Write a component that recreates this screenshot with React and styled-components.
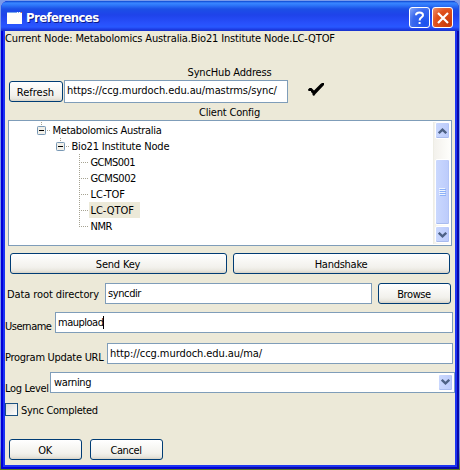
import React from "react";
import styled, { createGlobalStyle } from "styled-components";

const Global = createGlobalStyle`
  * { box-sizing: border-box; }
  body { margin: 0; background: #7f9be8; }
`;

const Desktop = styled.div`
  width: 460px;
  height: 470px;
  padding: 1px;
  overflow: hidden;
  background: linear-gradient(#7b9aea, #7f97ec 95%, #5a7a20);
  font-family: "DejaVu Sans Condensed", "DejaVu Sans", sans-serif;
  font-stretch: condensed;
  font-size: 11px;
  color: #000;
`;

const Window = styled.div`
  width: 458px;
  height: 468px;
  display: flex;
  flex-direction: column;
  border-radius: 7px 7px 0 0;
  overflow: hidden;
  background: linear-gradient(90deg, #0000d8 50%, #0808a8 50%);
`;

const TitleBar = styled.header`
  height: 30px;
  flex: none;
  display: flex;
  align-items: center;
  padding: 3px 6px 0 6px;
  background: linear-gradient(#0a45d0 0, #3a86ff 2px, #2f78fa 4px, #1c4fe6 8px, #1f43ea 14px, #2850fb 22px, #2858ff 26px, #1f40e8 28px, #1630c8 30px);
`;

const Title = styled.h1`
  margin: 0 auto 0 4px;
  font: bold 13px/18px "DejaVu Sans Condensed", "DejaVu Sans", sans-serif;
  font-stretch: condensed;
  letter-spacing: ${(p) => p.$spacing}px;
  color: #fff;
  text-shadow: 1px 1px 0 #0a1a8a;
`;

const CaptionButton = styled.button`
  width: 21px;
  height: 21px;
  margin: 0 0 0 2px;
  padding: 0;
  display: grid;
  place-items: center;
  border: 1px solid #fff;
  border-radius: 3px;
  background: ${(p) =>
    p.$close
      ? "radial-gradient(circle at 80% 80%, #c83a08, #e0501c 60%, #ee9474)"
      : "radial-gradient(circle at 80% 80%, #1a50f0, #3a68ee 60%, #8aaaf8)"};
`;

const Client = styled.main`
  margin: 0 2px;
  height: 436px;
  flex: none;
  display: flex;
  flex-direction: column;
  border: 2px solid #1c34f2;
  border-top: 0;
  background: #ece9d8;
`;

const Row = styled.div`
  flex: none;
  display: flex;
  align-items: center;
  height: ${(p) => p.$h}px;
  margin-top: ${(p) => p.$top || 0}px;
  padding-left: ${(p) => p.$left || 0}px;
  justify-content: ${(p) => (p.$center ? "center" : "flex-start")};
`;

const Heading = styled(Row)`
  padding-right: 1px;
`;

const Text = styled.span`
  flex: none;
  white-space: nowrap;
  line-height: 14px;
  padding-top: 2px;
  letter-spacing: ${(p) => p.$spacing || 0}px;
  width: ${(p) => (p.$w ? `${p.$w}px` : "auto")};
  margin-top: ${(p) => p.$drop || 0}px;
`;

const Button = styled.button`
  width: ${(p) => p.$w}px;
  height: 21px;
  margin: 0 0 0 ${(p) => p.$gap || 0}px;
  padding: 2px 1px 0 0;
  border: 1px solid #003c74;
  border-radius: 3px;
  font: inherit;
  line-height: 14px;
  letter-spacing: ${(p) => p.$spacing || 0}px;
  color: #000;
  background: linear-gradient(#fff, #f2f1ec 70%, #e8e6de 88%, #d6d2c6);
`;

const Field = styled.div`
  width: ${(p) => p.$w}px;
  height: ${(p) => (p.$tall ? 23 : 21)}px;
  margin-left: ${(p) => p.$gap || 0}px;
  display: flex;
  align-items: center;
  padding: 0 ${(p) => (p.$combo ? 1 : 2)}px ${(p) => (p.$tall ? 3 : 1)}px ${(p) => p.$pad || 2}px;
  border: 1px solid #7f9db9;
  background: #fff;
`;

const Caret = styled.i`
  width: 1px;
  height: 13px;
  background: #000;
`;

const CheckMark = styled.svg`
  margin: 0 0 5px 20px;
`;

const Tree = styled.section`
  width: 444px;
  height: 126px;
  margin: 1px 0 0 3px;
  flex: none;
  display: flex;
  border: 1px solid #7f9db9;
  background: #fff;
`;

const Items = styled.ul`
  flex: 1;
  margin: 0;
  padding: 1px 0 0;
  list-style: none;
`;

const Item = styled.li`
  height: 16px;
  display: flex;
  align-items: center;
  padding-left: ${(p) => p.$indent}px;
`;

const ItemLabel = styled.span`
  height: 16px;
  line-height: 17px;
  padding-left: 1.5px;
  white-space: nowrap;
  letter-spacing: ${(p) => p.$spacing}px;
  width: ${(p) => (p.$selected ? "51px" : "auto")};
  background: ${(p) => (p.$selected ? "#ece9d8" : "transparent")};
`;

const Scroll = styled.div`
  width: 17px;
  margin: 1px 1px 1px 0;
  display: flex;
  flex-direction: column;
  align-items: center;
  border-left: 1px solid #eeede5;
  background: linear-gradient(90deg, #f3f1ec, #fefefb);
`;

const ScrollButton = styled.div`
  width: 15px;
  height: ${(p) => p.$h || 17}px;
  flex: none;
  display: grid;
  place-items: center;
  margin-top: ${(p) => p.$top || 0}px;
  border: 1px solid #fff;
  border-radius: 2px;
  background: linear-gradient(90deg, #cad8fe, #bccbfb);
  box-shadow: inset 0 -1px 0 #a8bbee, inset -1px 0 0 #b2c4f6;
`;

const CheckBox = styled.span`
  width: 13px;
  height: 13px;
  margin-right: 3px;
  border: 1px solid #1c5180;
  background: linear-gradient(135deg, #dcdcd7, #fff);
`;

const Arrow = ({ up }) => (
  <svg width="9" height="6" viewBox="0 0 9 6">
    <path d={up ? "M.8 5.2 4.5 1.6 8.2 5.2" : "M.8 .8 4.5 4.4 8.2 .8"} fill="none" stroke="#4d6185" strokeWidth="2.3" />
  </svg>
);

const Branch = ({ last }) => (
  <svg width="10" height="16" viewBox="0 0 10 16" shapeRendering="crispEdges">
    <path d={last ? "M.5 0V9" : "M.5 0V16"} stroke="#a6a392" strokeDasharray="1 1" />
    <path d="M2 8.5H9" stroke="#a6a392" strokeDasharray="1 1" />
  </svg>
);

const Expander = () => (
  <svg width="14" height="16" viewBox="0 0 14 16">
    <path d="M4.5 0V4M10 8.5H13" stroke="#a6a392" strokeDasharray="1 1" shapeRendering="crispEdges" />
    <rect x=".5" y="4.5" width="8" height="8" rx=".8" fill="#f1efe8" stroke="#7898b5" />
    <path d="M2 8.5H7" stroke="#000" shapeRendering="crispEdges" />
  </svg>
);

const WindowIcon = () => (
  <svg width="15" height="12" viewBox="0 0 15 12" shapeRendering="crispEdges">
    <path d="M0 0H15V12H0Z" fill="#fffefb" />
    <path d="M0 0H15V1H0Z" fill="#7aa8ec" />
    <path d="M10 0H11V1H10ZM12 0H13V1H12Z" fill="#fff" />
    <path d="M14 0H15V1H14Z" fill="#e07048" />
  </svg>
);

const nodes = [
  { name: "GCMS001", spacing: -0.55 },
  { name: "GCMS002", spacing: -0.4 },
  { name: "LC-TOF", spacing: 0 },
  { name: "LC-QTOF", spacing: -0.05, selected: true },
  { name: "NMR", spacing: -0.5, last: true },
];

export default function App() {
  return (
    <Desktop>
      <Global />
      <Window>
        <TitleBar>
          <WindowIcon />
          <Title $spacing={-0.6}>Preferences</Title>
          <CaptionButton aria-label="Help">
            <svg width="11" height="14" viewBox="0 0 11 14">
              <path d="M2 4.2C2 .6 9 .6 9 4.2 9 6.4 5.6 6.2 5.6 9.4M5.6 11V13" fill="none" stroke="#fff" strokeWidth="2" />
            </svg>
          </CaptionButton>
          <CaptionButton $close aria-label="Close">
            <svg width="12" height="12" viewBox="0 0 12 12">
              <path d="M1 1 11 11M11 1 1 11" stroke="#fff" strokeWidth="2.2" />
            </svg>
          </CaptionButton>
        </TitleBar>
        <Client>
          <Row $h={14}>
            <Text $spacing={-0.15}>Current Node: Metabolomics Australia.Bio21 Institute Node.LC-QTOF</Text>
          </Row>
          <Heading $h={14} $top={20} $center><Text $spacing={-0.16}>SyncHub Address</Text></Heading>
          <Row $h={23} $top={1} $left={4}>
            <Button $w={54}>Refresh</Button>
            <Field $w={224} $gap={1} $tall><Text $spacing={-0.08}>https://ccg.murdoch.edu.au/mastrms/sync/</Text></Field>
            <CheckMark width="16" height="13" viewBox="0 0 16 13">
              <path d="M0 6.5 1.5 5H3.5L6 7.5 12.5 1 14 0H16V2L7.5 11 6 13 4.5 12V10.5L3 9V8H.5Z" fill="#000" />
            </CheckMark>
          </Row>
          <Heading $h={14} $top={2} $center><Text $spacing={-0.2}>Client Config</Text></Heading>
          <Tree>
            <Items>
              <Item $indent={28}><Expander /><ItemLabel $spacing={-0.3}>Metabolomics Australia</ItemLabel></Item>
              <Item $indent={47}><Expander /><ItemLabel $spacing={-0.18}>Bio21 Institute Node</ItemLabel></Item>
              {nodes.map((n) => (
                <Item key={n.name} $indent={70}>
                  <Branch last={n.last} />
                  <ItemLabel $selected={n.selected} $spacing={n.spacing}>{n.name}</ItemLabel>
                </Item>
              ))}
            </Items>
            <Scroll>
              <ScrollButton><Arrow up /></ScrollButton>
              <ScrollButton $h={66} $top={20}>
                <svg width="7" height="8" viewBox="0 0 7 8" shapeRendering="crispEdges">
                  <path d="M0 .5H6M0 2.5H6M0 4.5H6M0 6.5H6" stroke="#eef4fe" />
                  <path d="M1 1.5H7M1 3.5H7M1 5.5H7M1 7.5H7" stroke="#8cb0f8" />
                </svg>
              </ScrollButton>
              <ScrollButton $top={1}><Arrow /></ScrollButton>
            </Scroll>
          </Tree>
          <Row $h={21} $top={7} $left={5}>
            <Button $w={217} $spacing={-0.2}>Send Key</Button>
            <Button $w={217} $gap={6} $spacing={-0.25}>Handshake</Button>
          </Row>
          <Row $h={21} $top={9} $left={2}>
            <Text $w={98} $spacing={-0.1}>Data root directory</Text>
            <Field $w={267}><Text $spacing={-0.4}>syncdir</Text></Field>
            <Button $w={73} $gap={6} $spacing={-0.4}>Browse</Button>
          </Row>
          <Row $h={21} $top={8}>
            <Text $w={50} $drop={6} $spacing={-0.5}>Username</Text>
            <Field $w={398}><Text $spacing={-0.5}>maupload</Text><Caret /></Field>
          </Row>
          <Row $h={21} $top={10}>
            <Text $w={102} $drop={6} $spacing={-0.28}>Program Update URL</Text>
            <Field $w={346}><Text $spacing={-0.07}>http://ccg.murdoch.edu.au/ma/</Text></Field>
          </Row>
          <Row $h={21} $top={8}>
            <Text $w={45} $drop={10} $spacing={-0.35}>Log Level</Text>
            <Field $w={405} $combo $pad={3}>
              <Text $w={384} $spacing={-0.35}>warning</Text>
              <ScrollButton><Arrow /></ScrollButton>
            </Field>
          </Row>
          <Row $h={13} $top={10}><CheckBox /><Text $spacing={-0.3}>Sync Completed</Text></Row>
          <Row $h={21} $top={23} $left={4}>
            <Button $w={73} $spacing={-0.4}>OK</Button>
            <Button $w={73} $gap={8} $spacing={-0.4}>Cancel</Button>
          </Row>
        </Client>
      </Window>
    </Desktop>
  );
}
